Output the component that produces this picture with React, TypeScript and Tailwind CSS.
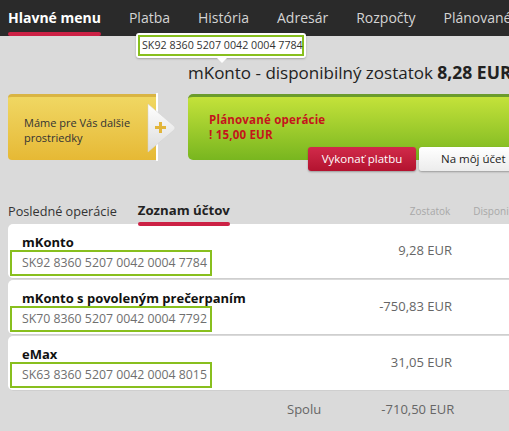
import React from 'react';

const navItems = ['Platba', 'História', 'Adresár', 'Rozpočty', 'Plánované operácie'];

const accounts = [
  { name: 'mKonto', iban: 'SK92 8360 5207 0042 0004 7784', balance: '9,28 EUR' },
  { name: 'mKonto s povoleným prečerpaním', iban: 'SK70 8360 5207 0042 0004 7792', balance: '-750,83 EUR' },
  { name: 'eMax', iban: 'SK63 8360 5207 0042 0004 8015', balance: '31,05 EUR' },
];

const Arrow = () => (
  <svg width="30" height="50" viewBox="0 0 30 50" className="absolute left-[146px] top-[9px]">
    <defs>
      <linearGradient id="arr" x1="0" y1="0" x2="0" y2="1">
        <stop offset="0" stopColor="#ffffff" />
        <stop offset="1" stopColor="#dcdcdc" />
      </linearGradient>
    </defs>
    <path d="M2 1 L28 23 Q30 25 28 27 L2 49 Z" fill="url(#arr)" stroke="#d0d0d0" strokeWidth="0.5" />
    <rect x="9" y="23" width="11" height="3" fill="#e2b53a" />
    <rect x="13" y="19" width="3" height="11" fill="#e2b53a" />
  </svg>
);

export default function App() {
  return (
    <div className="w-[509px] h-[431px] overflow-hidden bg-[#dadada] relative" style={{ fontFamily: '"Open Sans", "DejaVu Sans", sans-serif' }}>
      <div className="w-[640px]">
        {/* top nav */}
        <div className="h-[36px] bg-[#2a2a2a] flex pl-[8px] gap-[28px]">
          <div className="flex flex-col h-full">
            <span className="text-[14px] font-bold text-white leading-[20px] pt-[8px]">Hlavné menu</span>
            <div className="mt-auto h-[4px] rounded-full bg-[#cc2145]" />
          </div>
          {navItems.map((item) => (
            <span key={item} className="text-[14px] text-[#d4d4d4] leading-[20px] pt-[8px] whitespace-nowrap">
              {item}
            </span>
          ))}
        </div>

        {/* iban tooltip */}
        <div className="absolute left-[136px] top-[33px] bg-white rounded-[3px] p-[2px] shadow-[0_1px_2px_rgba(0,0,0,0.25)]">
          <div className="w-[166px] border-2 border-[#88bf1e] px-[2px] h-[21px] flex items-center text-[10.7px] text-[#333] whitespace-nowrap">
            SK92 8360 5207 0042 0004 7784
          </div>
          <div className="absolute left-[80px] -bottom-[5px] w-0 h-0 border-l-[6px] border-r-[6px] border-t-[6px] border-l-transparent border-r-transparent border-t-white" />
        </div>

        {/* title */}
        <div className="pl-[188px] pt-[24px] text-[17px] leading-[24px] text-[#222] whitespace-nowrap">
          mKonto - disponibilný zostatok <span className="font-bold text-[17.5px]">8,28 EUR</span>
        </div>

        {/* promo + planned */}
        <div className="flex mt-[9px]">
          <div className="relative flex w-[180px] shrink-0 pl-[8px]">
            <div className="w-[148px] h-[66px] rounded-l-[4px] border-t-[3px] border-[#d9b443] bg-gradient-to-b from-[#f0d762] to-[#e6b934] flex items-center pl-[16px] pr-[20px] pt-[2px] text-[11px] leading-[15px] text-[#333]">
              Máme pre Vás dalšie prostriedky
            </div>
            <div className="w-[2px] h-[68px] -mt-[1px] bg-white" />
            <Arrow />
          </div>
          <div className="flex flex-col pl-[8px]">
            <div className="w-[360px] h-[66px] rounded-l-[5px] border-t-[3px] border-[#6b9b2c] bg-gradient-to-b from-[#c4e23a] to-[#78b61f] pl-[21px] pt-[15px] text-[11.5px] leading-[15px] font-bold text-[#c4141c] tracking-[0.2px]">
              <div>Plánované operácie</div>
              <div>! 15,00 EUR</div>
            </div>
            <div className="flex gap-[3px] pl-[120px] -mt-[13px]">
              <div className="w-[108px] h-[24px] rounded-[3px] bg-gradient-to-b from-[#d12a4a] to-[#b3122f] text-white text-[11.5px] flex items-center justify-center shadow-[0_1px_2px_rgba(0,0,0,0.3)]">
                Vykonať platbu
              </div>
              <div className="w-[110px] h-[24px] rounded-[3px] bg-gradient-to-b from-white to-[#ececec] text-[#222] text-[11.5px] flex items-center pl-[22px] shadow-[0_1px_2px_rgba(0,0,0,0.3)]">
                Na môj účet
              </div>
            </div>
          </div>
        </div>

        {/* tabs */}
        <div className="flex items-end mt-[31px] pl-[8px] h-[24px]">
          <span className="text-[12.7px] text-[#333] leading-[18px] pb-[6px] whitespace-nowrap">Posledné operácie</span>
          <div className="flex flex-col ml-[21px]">
            <span className="text-[13.2px] font-bold text-[#222] leading-[18px] pb-[3px] whitespace-nowrap">Zoznam účtov</span>
            <div className="h-[4px] rounded-full bg-[#cc2145] relative z-10" />
          </div>
          <span className="ml-[180px] text-[10px] text-[#a8a8a8] leading-[18px] pb-[6px]">Zostatok</span>
          <span className="ml-[23px] text-[10px] text-[#a8a8a8] leading-[18px] pb-[6px]">Disponibilný</span>
        </div>

        {/* accounts */}
        <div className="flex flex-col gap-[1px] pl-[8px] -mt-[2px]">
          {accounts.map((a) => (
            <div key={a.iban} className="h-[55px] bg-white rounded-l-[5px] flex items-center border-b border-[#cfcfcf]">
              <div className="w-[370px] pl-[2px] pb-[2px] self-end flex flex-col">
                <span className="pl-[12px] text-[13px] font-bold text-[#111] leading-[15px]">{a.name}</span>
                <div className="w-[202px] h-[26px] border-2 border-[#88bf1e] pl-[10px] flex items-center text-[12.3px] text-[#6f6f6f] whitespace-nowrap">
                  {a.iban}
                </div>
              </div>
              <span className="w-[74px] text-right text-[13px] text-[#666]">{a.balance}</span>
            </div>
          ))}
        </div>

        <div className="flex pl-[287px] pt-[9px] text-[13px] text-[#666]">
          <span>Spolu</span>
          <span className="w-[133px] text-right">-710,50 EUR</span>
        </div>
      </div>
    </div>
  );
}
